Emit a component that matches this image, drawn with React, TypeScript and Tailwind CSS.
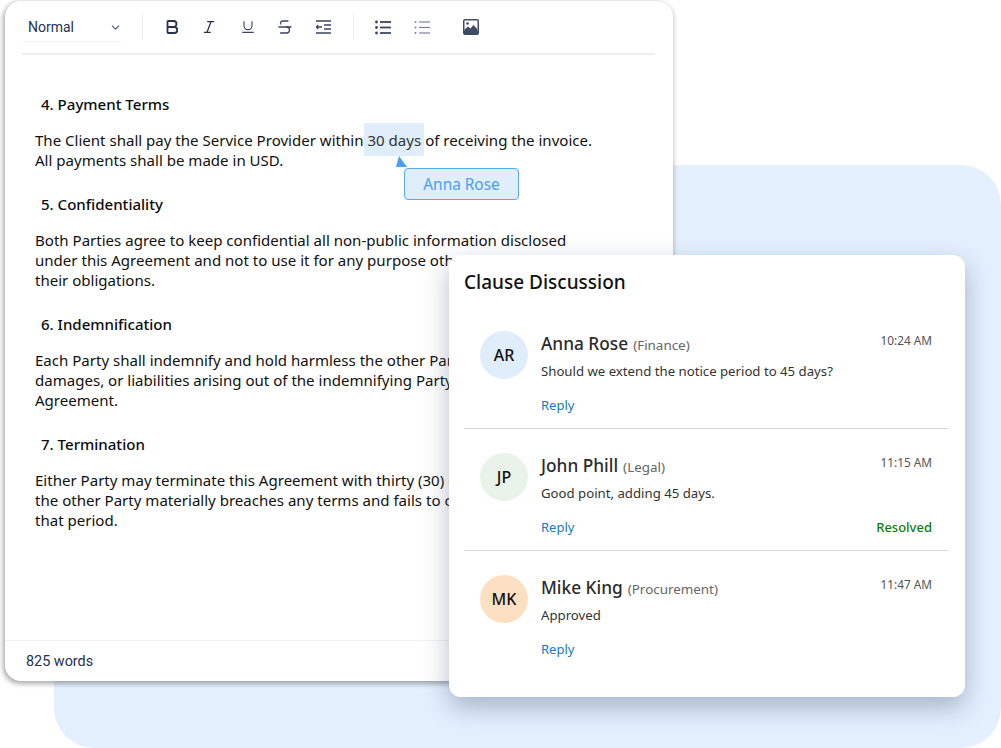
import { Bold, ChevronDown, Italic, Strikethrough, Underline } from "lucide-react";

const body = "font-['Noto_Sans','Open_Sans',sans-serif]";

function ListIcon({ muted }: { muted?: boolean }) {
  const c = muted ? "#7b8499" : "#3a4560";
  const w = muted ? 1.2 : 1.8;
  return (
    <svg width="16" height="15" viewBox="0 0 16 15" fill="none">
      {[2, 7.5, 13].map((y) => (
        <g key={y}>
          <circle cx="1.5" cy={y} r={muted ? 1 : 1.4} fill={c} />
          <path d={`M5 ${y}H16`} stroke={c} strokeWidth={w} />
        </g>
      ))}
    </svg>
  );
}

function OutdentIcon() {
  return (
    <svg width="15" height="14" viewBox="0 0 15 14" fill="none" stroke="#3a4560" strokeWidth="1.3">
      <path d="M0 1H15M0 13H15M8 5H15M8 9H15" />
      <path d="M0 7H6M2.2 5L0.4 7L2.2 9" />
    </svg>
  );
}

function ImageIcon() {
  return (
    <svg width="16" height="16" viewBox="0 0 16 16">
      <rect x="0" y="0" width="16" height="16" rx="2" fill="#3f4a66" />
      <rect x="1.5" y="1.5" width="13" height="10.5" fill="#fff" />
      <circle cx="4.5" cy="4.5" r="1.3" fill="#3f4a66" />
      <path d="M1.5 12V10.5L5 7.5L7.5 9.5L10.5 6L14.5 10.5V12Z" fill="#3f4a66" />
    </svg>
  );
}

function Section({ title, lines }: { title: string; lines: React.ReactNode[] }) {
  return (
    <section className="mb-6">
      <h3 className="pl-[6px] text-[15.05px] leading-5 font-medium text-[#0c0c0c]">{title}</h3>
      <div className="mt-4 text-[15.05px] leading-5 text-[#111]">
        {lines.map((l, i) => (
          <div key={i} className="whitespace-nowrap">{l}</div>
        ))}
      </div>
    </section>
  );
}

function Comment({
  initials, avatar, name, role, time, text, resolved, last,
}: {
  initials: string; avatar: string; name: string; role: string; time: string; text: string; resolved?: boolean; last?: boolean;
}) {
  return (
    <div className={`flex h-[122px] gap-[13px] px-4 pt-6 ${last ? "" : "border-b border-[#d6d6d6]"}`}>
      <div className={`flex size-12 shrink-0 items-center justify-center rounded-full text-[16px] font-medium text-[#111] ${avatar}`}>
        {initials}
      </div>
      <div className="min-w-0 flex-1">
        <div className="flex items-start justify-between">
          <div className="flex items-baseline gap-[5px] whitespace-nowrap">
            <span className="text-[17.3px] leading-[26px] font-medium text-[#2b2b2b]">{name}</span>
            <span className="text-[13.4px] text-[#666]">{role}</span>
          </div>
          <span className="-mt-[1px] text-[11.8px] leading-5 text-[#555]">{time}</span>
        </div>
        <p className="mt-[4px] text-[13.2px] leading-5 text-[#333]">{text}</p>
        <div className="mt-[14px] flex items-center justify-between text-[13px] leading-5">
          <span className="text-[#1976c9]">Reply</span>
          {resolved && <span className="font-medium text-[#107c10]">Resolved</span>}
        </div>
      </div>
    </div>
  );
}

export default function App() {
  return (
    <div className={`relative h-[748px] w-[1001px] overflow-hidden bg-white ${body}`}>
      <div className="absolute top-[165px] right-0 bottom-0 left-[54px] rounded-[40px] bg-[#e4f0fe]" />

      <div className="absolute top-[1px] left-[5px] flex h-[680px] w-[668px] flex-col rounded-2xl bg-white shadow-[-1px_2px_5px_1px_rgba(0,0,0,0.32)]">
        <div className="mr-[18px] ml-[17px] flex h-[54px] shrink-0 items-center border-b-2 border-[#eceef4] font-['Roboto',sans-serif] text-[#26324f]">
          <div className="flex h-[29px] w-[100px] items-center justify-between border-b border-[#f2f3f6] pl-[6px] pr-0 pt-[1px] text-[14px]">
            <span>Normal</span>
            <ChevronDown size={13} strokeWidth={2} className="text-[#4a5570]" />
          </div>
          <div className="mr-[20px] ml-[20px] h-[26px] w-px bg-[#eceef4]" />
          <Bold size={18} strokeWidth={2.4} className="mr-[20px]" />
          <Italic size={16} strokeWidth={1.9} className="mr-[23px]" />
          <Underline size={16} strokeWidth={1.7} className="mr-[20px] text-[#3a4560]" />
          <Strikethrough size={18} strokeWidth={1.7} className="mr-[22px] text-[#3a4560]" />
          <OutdentIcon />
          <div className="mr-[21px] ml-[22px] h-[26px] w-px bg-[#eceef4]" />
          <ListIcon />
          <span className="w-[23px]" />
          <ListIcon muted />
          <span className="w-[33px]" />
          <ImageIcon />
        </div>

        <div className="flex-1 overflow-hidden pt-[39px] pl-[30px]">
          <Section
            title="4. Payment Terms"
            lines={[
              <span>
                The Client shall pay the Service Provider within<span className="mx-[1px] bg-[#e0edfb] px-[3px] pt-[7px] pb-[6px] text-[#333]">30 days</span>of receiving the invoice.
              </span>,
              "All payments shall be made in USD.",
            ]}
          />
          <Section
            title="5. Confidentiality"
            lines={[
              "Both Parties agree to keep confidential all non-public information disclosed",
              "under this Agreement and not to use it for any purpose other than fulfilling",
              "their obligations.",
            ]}
          />
          <Section
            title="6. Indemnification"
            lines={[
              "Each Party shall indemnify and hold harmless the other Party from any claims,",
              "damages, or liabilities arising out of the indemnifying Party's breach of this",
              "Agreement.",
            ]}
          />
          <Section
            title="7. Termination"
            lines={[
              "Either Party may terminate this Agreement with thirty (30) days' written notice if",
              "the other Party materially breaches any terms and fails to cure the breach within",
              "that period.",
            ]}
          />
        </div>

        <div className="flex h-[41px] shrink-0 items-center border-t border-[#f0f1f5] pt-[1px] pl-[21px] font-['Roboto',sans-serif] text-[14.4px] text-[#26324f]">
          825 words
        </div>
      </div>

      <svg className="absolute top-[156px] left-[396px]" width="12" height="12" viewBox="0 0 12 12">
        <path d="M3 0L11 11H0Z" fill="#4a9ff5" />
      </svg>
      <div className="absolute top-[168px] left-[404px] flex h-[32px] w-[115px] items-center justify-center rounded-[4px] border border-[#5aa9f2] bg-[#e0edfb] pt-[1px] text-[15.4px] text-[#4a9ff5]">
        Anna Rose
      </div>

      <div className="absolute top-[255px] left-[449px] h-[442px] w-[516px] rounded-xl bg-white pr-[17px] pl-[15px] shadow-[0_10px_26px_rgba(60,80,110,0.38)]">
        <h2 className="pt-[14px] pb-[12px] text-[19px] leading-[26px] font-medium text-[#111]">Clause Discussion</h2>
        <Comment initials="AR" avatar="bg-[#e0edfb]" name="Anna Rose" role="(Finance)" time="10:24 AM" text="Should we extend the notice period to 45 days?" />
        <Comment initials="JP" avatar="bg-[#e9f3ea]" name="John Phill" role="(Legal)" time="11:15 AM" text="Good point, adding 45 days." resolved />
        <Comment initials="MK" avatar="bg-[#fde0c2]" name="Mike King" role="(Procurement)" time="11:47 AM" text="Approved" last />
      </div>
    </div>
  );
}
